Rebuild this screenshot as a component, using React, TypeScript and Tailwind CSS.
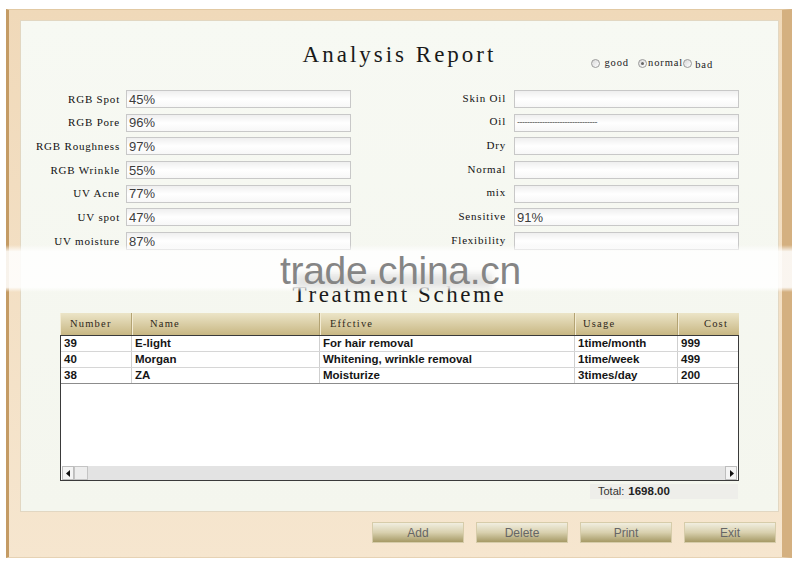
import React from "react";

const leftRows: [string, string][] = [
  ["RGB Spot", "45%"],
  ["RGB Pore", "96%"],
  ["RGB Roughness", "97%"],
  ["RGB Wrinkle", "55%"],
  ["UV Acne", "77%"],
  ["UV spot", "47%"],
  ["UV moisture", "87%"],
];

const rightRows: [string, string][] = [
  ["Skin Oil", ""],
  ["Oil", "dash"],
  ["Dry", ""],
  ["Normal", ""],
  ["mix", ""],
  ["Sensitive", "91%"],
  ["Flexibility", ""],
];

const tableRows = [
  ["39", "E-light", "For hair removal", "1time/month", "999"],
  ["40", "Morgan", "Whitening, wrinkle removal", "1time/week", "499"],
  ["38", "ZA", "Moisturize", "3times/day", "200"],
];

function Box({ value }: { value: string }) {
  return (
    <div className="w-[225px] h-[18px] border border-[#c8c8c8] bg-linear-to-b from-[#efefef] via-white to-[#f7f7f7] flex items-center pl-[2px] text-[13px] leading-none text-[#3c3c3c] font-['Liberation_Sans',Arial,sans-serif]">
      {value === "dash" ? (
        <span className="text-[9px] text-[#555] tracking-[-0.5px]">--------------------------------</span>
      ) : (
        value
      )}
    </div>
  );
}

function Radio({ checked }: { checked?: boolean }) {
  return (
    <span className="inline-flex w-[9px] h-[9px] rounded-full border border-[#9a9a9a] bg-linear-to-br from-[#d8d8d8] to-white items-center justify-center">
      {checked && <span className="w-[3px] h-[3px] rounded-full bg-[#666]" />}
    </span>
  );
}

function Btn({ label }: { label: string }) {
  return (
    <div className="w-[92px] h-[21px] border border-[#d6ccaa] bg-linear-to-b from-[#f1eee0] via-[#d8d0ae] to-[#a69a66] flex items-center justify-center text-[12px] text-[#666] font-['Liberation_Sans',Arial,sans-serif]">
      {label}
    </div>
  );
}

export default function App() {
  return (
    <div className="w-[800px] h-[566px] bg-white relative overflow-hidden pt-[9px] pl-[6px]">
      {/* outer frame */}
      <div className="w-[786px] h-[549px] bg-linear-to-b from-[#f0d9b9] to-[#f6e6cf] border-t border-t-[#e2c9a3] border-l-[3px] border-l-[#c49b64] border-r-[10px] border-r-[#d4b080] border-b border-b-[#e6d2b4] pt-[10px] pl-[11px] pr-[3px] flex flex-col">
        {/* inner panel */}
        <div className="w-[759px] h-[492px] bg-linear-to-b from-[#f7f9f3] to-[#f4f6ee] border border-[#e2d7c2] flex flex-col">
          {/* title row */}
          <div className="mt-[21px] grid grid-cols-[1fr_auto_1fr] h-[26px]">
            <div />
            <div className="font-['Liberation_Serif','Times_New_Roman',serif] text-[23px] leading-[26px] tracking-[3px] text-[#1a1a1a]">Analysis Report</div>
            <div className="font-['Liberation_Serif','Times_New_Roman',serif] ml-[95px] self-end flex items-end text-[10.5px] leading-[12px] tracking-[0.9px] text-[#222] -mb-[3px]">
              <span className="flex items-center gap-[4px] mb-[2px]">
                <Radio />
                <span>good</span>
              </span>
              <span className="flex items-center gap-[1px] ml-[9px] mb-[2px]">
                <Radio checked />
                <span>normal</span>
              </span>
              <span className="flex items-center gap-[3px]">
                <span className="mb-[3px] inline-flex"><Radio /></span>
                <span>bad</span>
              </span>
            </div>
          </div>

          {/* fields */}
          <div className="mt-[22px] flex flex-col gap-[5.7px]">
            {leftRows.map((l, i) => {
              const r = rightRows[i];
              return (
                <div key={i} className="flex items-center h-[18px]">
                  <div className="font-['Liberation_Serif','Times_New_Roman',serif] w-[99px] text-right text-[11px] tracking-[0.8px] text-[#111] leading-none">{l[0]}</div>
                  <div className="ml-[6px]">
                    <Box value={l[1]} />
                  </div>
                  <div className="font-['Liberation_Serif','Times_New_Roman',serif] ml-[15px] w-[140px] text-right text-[11px] tracking-[0.8px] text-[#111] leading-none -mt-[2px]">{r[0]}</div>
                  <div className="ml-[8px]">
                    <Box value={r[1]} />
                  </div>
                </div>
              );
            })}
          </div>

          {/* treatment title */}
          <div className="font-['Liberation_Serif','Times_New_Roman',serif] mt-[32px] h-[26px] text-center text-[23px] leading-[26px] tracking-[2.6px] text-[#1a1a1a]">
            Treatment Scheme
          </div>

          {/* table */}
          <div className="mt-[5px] ml-[39px] w-[679px] flex flex-col">
            <div className="grid grid-cols-[72px_188px_255px_103px_61px] h-[23px] bg-linear-to-b from-[#ece5c8] to-[#c8b783] border-b border-[#3a3a3a] font-['Liberation_Serif','Times_New_Roman',serif] text-[10.5px] tracking-[1.2px] text-[#2e271a]">
              <div className="border-r border-r-[#b3a373] shadow-[inset_1px_0_0_#f3ecd4] flex items-center pl-[10px]">Number</div>
              <div className="border-r border-r-[#b3a373] shadow-[inset_1px_0_0_#f3ecd4] flex items-center pl-[18px]">Name</div>
              <div className="border-r border-r-[#b3a373] shadow-[inset_1px_0_0_#f3ecd4] flex items-center pl-[10px]">Effctive</div>
              <div className="border-r border-r-[#b3a373] shadow-[inset_1px_0_0_#f3ecd4] flex items-center pl-[8px]">Usage</div>
              <div className="shadow-[inset_1px_0_0_#f3ecd4] flex items-center justify-end pr-[11px]">Cost</div>
            </div>
            <div className="h-[145px] bg-white border-l border-r border-b border-[#3a3a3a] flex flex-col">
              {tableRows.map((row, i) => (
                <div
                  key={i}
                  className={`grid grid-cols-[71px_188px_255px_103px_60px] h-[16px] border-b ${i === 2 ? "border-b-[#8c8c8c]" : "border-b-[#d6d6d6]"} font-['Liberation_Sans',Arial,sans-serif] font-bold text-[11.5px] leading-[15px] text-[#151515]`}
                >
                  {row.map((c, j) => (
                    <div key={j} className={`pl-[3px] whitespace-nowrap overflow-hidden ${j < 4 ? "border-r border-r-[#cfcfcf]" : ""}`}>
                      {c}
                    </div>
                  ))}
                </div>
              ))}
              <div className="flex-1" />
              {/* scrollbar */}
              <div className="h-[14px] mx-[1px] flex bg-[#e3e3e3] bg-[radial-gradient(#d0d0d0_0.6px,transparent_0.7px)] bg-[length:2px_2px]">
                <div className="w-[12px] h-[14px] bg-[#f4f4f4] border border-[#bdbdbd] flex items-center justify-center">
                  <svg width="5" height="7" viewBox="0 0 5 7"><path d="M4 0 L0 3.5 L4 7 Z" fill="#111" /></svg>
                </div>
                <div className="w-[14px] h-[14px] bg-[#ededed] border border-[#c4c4c4]" />
                <div className="flex-1" />
                <div className="w-[12px] h-[14px] bg-[#f4f4f4] border border-[#bdbdbd] flex items-center justify-center">
                  <svg width="5" height="7" viewBox="0 0 5 7"><path d="M1 0 L5 3.5 L1 7 Z" fill="#111" /></svg>
                </div>
              </div>
            </div>
          </div>

          {/* total */}
          <div className="mt-[3px] flex justify-end mr-[40px]">
            <div className="w-[148px] h-[15px] bg-[#eeeeea] flex items-center pl-[8px] gap-[4px] font-['Liberation_Sans',Arial,sans-serif] text-[11px] leading-none">
              <span className="text-[#333]">Total:</span>
              <span className="font-bold text-[#222] text-[11.5px]">1698.00</span>
            </div>
          </div>
        </div>

        {/* buttons */}
        <div className="mt-[10px] flex justify-end gap-[12px] pr-[3px]">
          <Btn label="Add" />
          <Btn label="Delete" />
          <Btn label="Print" />
          <Btn label="Exit" />
        </div>
      </div>

      {/* watermark band */}
      <div className="absolute left-0 top-[245px] w-[800px] h-[47px] bg-[linear-gradient(to_bottom,rgba(255,255,255,0)_0%,rgba(255,255,255,0.88)_14%,rgba(255,255,255,0.88)_90%,rgba(255,255,255,0)_100%)] pointer-events-none" />
      <div className="absolute left-[296px] top-[274px] w-[196px] h-[14px] bg-[rgba(120,120,120,0.2)] blur-[3px] pointer-events-none" />
      <div className="absolute left-[280px] top-[251px] text-[39px] leading-none text-[#858585] font-['Liberation_Sans',Arial,sans-serif] pointer-events-none tracking-[-0.3px]">
        trade.china.cn
      </div>
    </div>
  );
}
